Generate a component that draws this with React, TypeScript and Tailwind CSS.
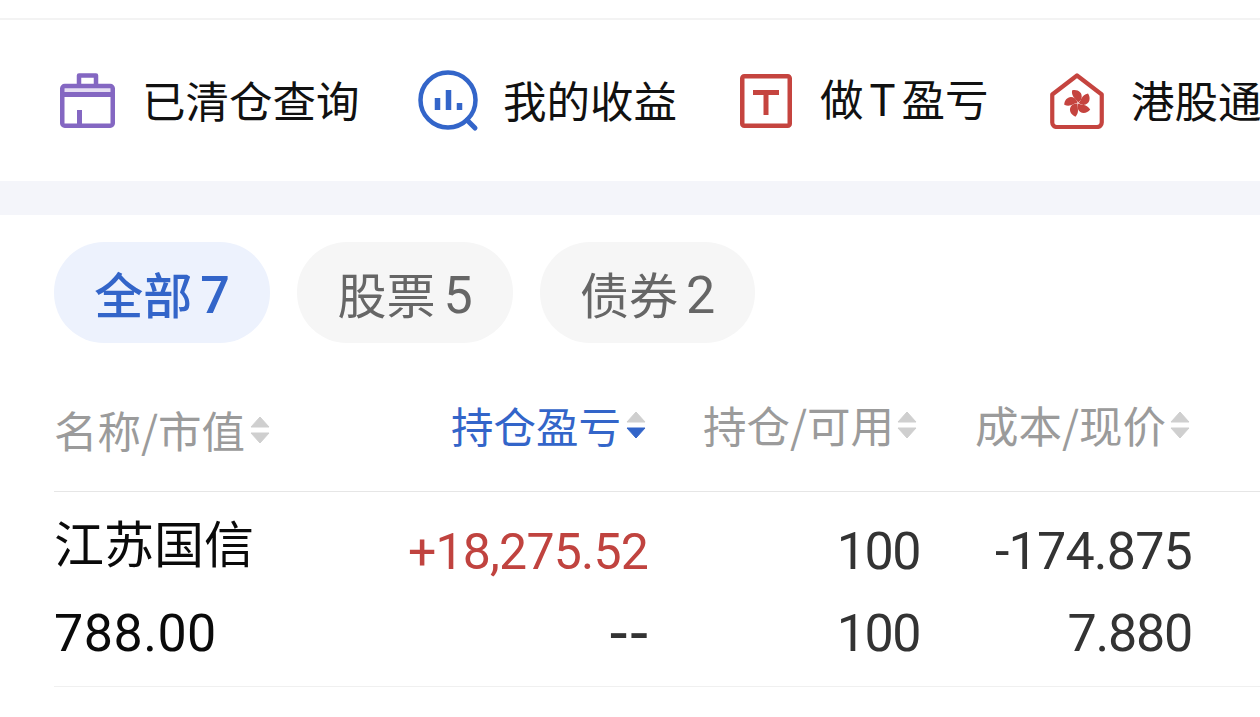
import React from 'react';

const cjk = "font-['Noto_Sans_CJK_SC',sans-serif]";
const num = "font-['Roboto','Noto_Sans_CJK_SC',sans-serif]";
const petal = 'M0-.5C-1.200-4-6.800-5.500-6-12.500C-1-14 5-11 3.500-4.500C2.800-2.800 1.500-1.500 0-.5z';

function CaseIcon() {
  return (
    <svg width="55" height="55" viewBox="0 0 55 55" fill="none" stroke="#8467c2" strokeWidth="4.500" strokeLinejoin="round" className="shrink-0">
      <path d="M2 14h51v5H2z" fill="#e6dff3" stroke="none" />
      <rect x="2.250" y="13" width="50.500" height="39.750" rx="2.500" />
      <path d="M19 12V2.500h17V12" />
      <path d="M2 21.500h51" strokeWidth="5" />
      <path d="M19.500 37v15" strokeWidth="5" />
    </svg>
  );
}

function ChartIcon() {
  return (
    <svg width="62" height="62" viewBox="0 0 62 62" fill="none" stroke="#3365c9" className="shrink-0">
      <circle cx="30" cy="30" r="27.500" strokeWidth="4.500" />
      <path d="M49 50l8 8" strokeWidth="5" strokeLinecap="round" />
      <path d="M19.500 28v12M30.500 20v20M41.500 33v7" strokeWidth="5.500" />
    </svg>
  );
}

function TIcon() {
  return (
    <svg width="52" height="54" viewBox="0 0 52 54" fill="none" stroke="#c5443f" className="shrink-0">
      <rect x="2.250" y="2.250" width="47.500" height="49.500" rx="2" strokeWidth="4.500" />
      <path d="M13 18.500h26M26 18.500V41" strokeWidth="5" />
    </svg>
  );
}

function HouseIcon() {
  return (
    <svg width="54" height="56" viewBox="0 0 54 56" fill="none" className="shrink-0">
      <path d="M2.250 21.500L27 2.500l24.750 19V49.500a4.500 4.500 0 0 1-4.500 4.500h-40.500a4.500 4.500 0 0 1-4.500-4.500z" stroke="#c5443f" strokeWidth="4.200" strokeLinejoin="round" />
      <g fill="#c5443f" transform="translate(28 30)">
        <path d={petal} />
        <path d={petal} transform="rotate(72)" />
        <path d={petal} transform="rotate(144)" />
        <path d={petal} transform="rotate(216)" />
        <path d={petal} transform="rotate(288)" />
      </g>
    </svg>
  );
}

function SortCaret({ active, className }: { active?: boolean; className: string }) {
  return (
    <svg width="20" height="28" viewBox="0 0 20 28" className={`shrink-0 ${className}`}>
      <path d="M10 1L19 11H1z" fill="#cfcfcf" stroke="#cfcfcf" strokeLinejoin="round" />
      <path d="M10 27L19 17H1z" fill={active ? '#3365c9' : '#cfcfcf'} stroke={active ? '#3365c9' : '#cfcfcf'} strokeLinejoin="round" />
    </svg>
  );
}

function Shortcut({ icon, label, className, gap }: { icon: React.ReactNode; label: React.ReactNode; className: string; gap: string }) {
  return (
    <div className={`flex items-center shrink-0 ${className}`}>
      {icon}
      <span className={`${gap} -mt-[2px] text-[43.500px] leading-none text-[#111] whitespace-nowrap`}>{label}</span>
    </div>
  );
}

function Tab({ label, count, active, width }: { label: string; count: number; active?: boolean; width: string }) {
  return (
    <div
      className={`flex items-center justify-center ${width} h-[101px] rounded-[50px] text-[49px] ${
        active ? 'bg-[#edf2fd] text-[#3365c9] font-medium' : 'bg-[#f6f6f6] text-[#666666]'
      }`}
    >
      <span>{label}</span>
      <span className={`${num} ml-[8px] pt-[6px] text-[52px] leading-none`}>{count}</span>
    </div>
  );
}

function HeadCell({ label, active, className, caretGap }: { label: string; active?: boolean; className?: string; caretGap: string }) {
  return (
    <div className={`flex items-center ${className ?? 'justify-end pr-[2px]'}`}>
      <span className={`leading-none whitespace-nowrap ${active ? 'text-[42.500px] text-[#3365c9]' : 'text-[43.500px] text-[#9b9b9b]'}`}>{label}</span>
      <SortCaret active={active} className={caretGap} />
    </div>
  );
}

export default function App() {
  return (
    <div className={`w-[1260px] h-[717px] overflow-hidden bg-white ${cjk}`}>
      <div className="h-5 border-b-2 border-[#f3f3f3]" />

      <div className="flex items-center h-[161px] pl-[60px] overflow-hidden">
        <Shortcut className="w-[358px]" gap="ml-[27px]" icon={<CaseIcon />} label="已清仓查询" />
        <Shortcut className="w-[322px]" gap="ml-[23px]" icon={<ChartIcon />} label="我的收益" />
        <Shortcut className="w-[310px]" gap="ml-[28px]" icon={<TIcon />} label={<>做<span className={`${num} mx-[6px]`}>T</span>盈亏</>} />
        <Shortcut className="w-[300px]" gap="ml-[27px]" icon={<HouseIcon />} label="港股通" />
      </div>

      <div className="h-[34px] bg-[#f4f5fa]" />

      <div className="flex gap-[27px] pl-[54px] pt-[27px]">
        <Tab label="全部" count={7} active width="w-[216px]" />
        <Tab label="股票" count={5} width="w-[216px]" />
        <Tab label="债券" count={2} width="w-[215px]" />
      </div>

      <div className="ml-[54px]">
        <div className="grid grid-cols-[300px_294px_271px_273px] h-[149px] pt-[16px] border-b border-[#e6e6e6] items-center">
          <HeadCell label="名称/市值" className="pt-[10px]" caretGap="ml-[5px]" />
          <HeadCell label="持仓盈亏" active caretGap="ml-[5px]" />
          <HeadCell label="持仓/可用" caretGap="ml-[3px]" />
          <HeadCell label="成本/现价" caretGap="ml-[4px]" />
        </div>

        <div className="grid grid-cols-[300px_294px_271px_273px] grid-rows-[82px_82px] h-[195px] pt-[19px] border-b border-[#f0f0f0] items-center text-right text-[#333333]">
          <div className="pb-[22px] text-left text-[50px] leading-none text-[#0a0a0a]">江苏国信</div>
          <div className={`${num} text-[50px] tracking-[-0.8px] leading-none text-[#c0433f]`}>+18,275.52</div>
          <div className={`${num} -mr-[1px] text-[52px] tracking-[-1.500px] leading-none`}>100</div>
          <div className={`${num} text-[52px] tracking-[-0.8px] leading-none`}>-174.875</div>
          <div className={`${num} text-left text-[52px] tracking-[0.5px] leading-none text-[#0a0a0a]`}>788.00</div>
          <div className={`${num} -mr-[3px] text-[64px] tracking-[3px] leading-none`}>--</div>
          <div className={`${num} -mr-[1px] text-[52px] tracking-[-1.500px] leading-none`}>100</div>
          <div className={`${num} text-[52px] tracking-[-1.200px] leading-none`}>7.880</div>
        </div>
      </div>
    </div>
  );
}
